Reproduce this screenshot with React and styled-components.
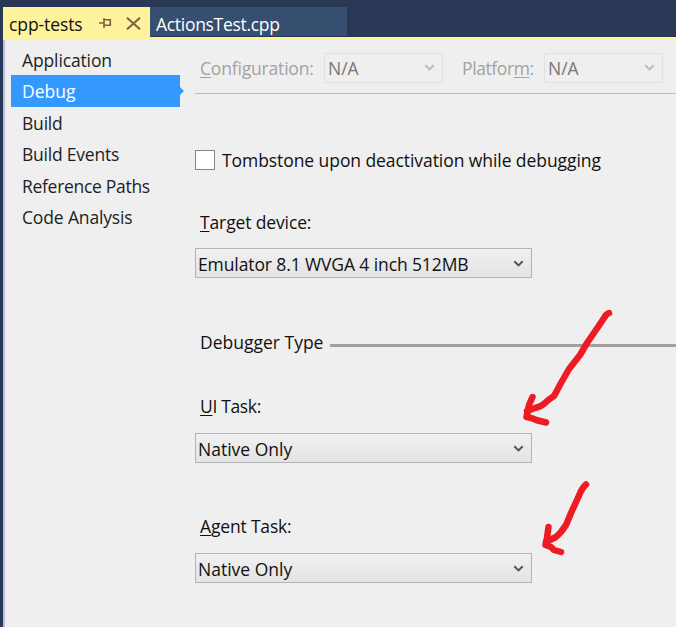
import React from "react";
import styled, { createGlobalStyle } from "styled-components";

const GlobalStyle = createGlobalStyle`
  * { box-sizing: border-box; }
  body { margin: 0; background: #293955; overflow: hidden; }
`;

const Window = styled.div`
  position: relative;
  display: flex;
  flex-direction: column;
  width: 676px;
  height: 627px;
  padding: 7px 0 0 3px;
  overflow: hidden;
  background: #293955;
  color: #1b1b1c;
  font-family: "Open Sans", "Noto Sans", sans-serif;
  font-size: 17.5px;
  line-height: 24px;
  white-space: nowrap;
`;

const Label = styled.span`
  letter-spacing: ${(p) => p.$spacing || 0}px;
  u {
    text-decoration-thickness: 1px;
    text-underline-offset: 2px;
    text-decoration-skip-ink: none;
  }
`;

const TabBar = styled.div`
  display: flex;
  height: 30px;
  flex: none;
`;

const Tab = styled.div`
  display: flex;
  align-items: center;
  width: ${(p) => (p.$active ? 147 : 197)}px;
  height: ${(p) => (p.$active ? 30 : 29)}px;
  padding: 4px 6px 0;
  background: ${(p) => (p.$active ? "#fff29d" : "#364e6f")};
  color: ${(p) => (p.$active ? "#111" : "#fff")};
`;

const TabIcons = styled.div`
  display: flex;
  align-items: center;
  gap: 14px;
  margin: -2px 3px 0 auto;
`;

const Body = styled.div`
  display: flex;
  flex: 1;
  min-height: 0;
  border-top: 3px solid #fff29d;
  background: #efefef;
  box-shadow: inset 2px 0 #b9c0dc;
`;

const Nav = styled.nav`
  display: flex;
  flex-direction: column;
  width: 178px;
  flex: none;
  padding: 4px 0 0 8px;
`;

const NavItem = styled.div`
  position: relative;
  height: 31.4px;
  width: 169px;
  padding: 4px 0 0 11px;
  background: ${(p) => (p.$selected ? "#3399ff" : "transparent")};
  color: ${(p) => (p.$selected ? "#fff" : "#1e1e1e")};
  &::after {
    content: "";
    display: ${(p) => (p.$selected ? "block" : "none")};
    position: absolute;
    left: 100%;
    top: 12px;
    border: 4px solid transparent;
    border-left-color: #3399ff;
    border-right: 0;
  }
`;

const Page = styled.main`
  display: flex;
  flex-direction: column;
  flex: 1;
  min-width: 0;
  padding: 12px 0 0 14px;
`;

const Toolbar = styled.div`
  display: flex;
  align-items: center;
  gap: 19px;
  height: 42px;
  padding: 0 0 10px 5px;
  border-bottom: 1px solid #bdbdbd;
  color: #a2a2a2;
`;

const ToolbarField = styled.div`
  display: flex;
  align-items: center;
  justify-content: space-between;
  width: ${(p) => p.$width}px;
`;

const Combo = styled.div`
  display: flex;
  align-items: center;
  justify-content: space-between;
  width: ${(p) => p.$width || 337}px;
  height: 30px;
  padding: ${(p) => (p.$disabled ? "0 7px 0 3px" : "1px 7px 0 2px")};
  border: 1px solid ${(p) => (p.$disabled ? "#e0e0e0" : "#b4b4b4")};
  background: ${(p) => (p.$disabled ? "#efefef" : "linear-gradient(#f0f0f0, #e4e4e4)")};
  color: ${(p) => (p.$disabled ? "#777" : "#111")};
`;

const CheckRow = styled.label`
  display: flex;
  align-items: center;
  gap: 7px;
  height: 24px;
  margin-top: 54px;
  color: #111;
`;

const CheckBox = styled.span`
  width: 20px;
  height: 20px;
  border: 1px solid #858585;
  background: #fff;
`;

const Field = styled.div`
  display: flex;
  flex-direction: column;
  gap: ${(p) => p.$gap}px;
  margin-top: ${(p) => p.$top}px;
  color: #111;
`;

const FieldLabel = styled.div`
  height: 24px;
  padding-left: 5px;
`;

const SectionTitle = styled.div`
  display: flex;
  align-items: center;
  height: 24px;
  margin-top: 52px;
  padding-left: 5px;
  color: #111;
`;

const SectionName = styled.div`
  width: 130px;
`;

const Rule = styled.div`
  flex: 1;
  height: 3px;
  margin-top: 7px;
  background: #a0a0a0;
`;

const Annotations = styled.svg`
  position: absolute;
  left: 0;
  top: 0;
`;

const Chevron = ({ color = "#555" }) => (
  <svg width="11" height="8" viewBox="0 0 11 8">
    <path d="M1.3 1.2L5.5 5.4L9.7 1.2" fill="none" stroke={color} strokeWidth="2" />
  </svg>
);

const Pin = () => (
  <svg width="13" height="12" viewBox="0 0 13 12">
    <path d="M0 6H5M5 1V11M5 2.7H11.3V9M5 8.2H12" fill="none" stroke="#756440" strokeWidth="1.6" />
  </svg>
);

const Close = () => (
  <svg width="15" height="13" viewBox="0 0 15 13">
    <path d="M1 .7L14 12.3M14 .7L1 12.3" fill="none" stroke="#756440" strokeWidth="2" />
  </svg>
);

const navItems = [
  { text: "Application", spacing: -0.13 },
  { text: "Debug", selected: true },
  { text: "Build", spacing: -0.2 },
  { text: "Build Events", spacing: -0.22 },
  { text: "Reference Paths", spacing: -0.3 },
  { text: "Code Analysis", spacing: -0.15 },
];

export default function App() {
  return (
    <Window>
      <GlobalStyle />
      <TabBar>
        <Tab $active>
          <Label $spacing={-0.1}>cpp-tests</Label>
          <TabIcons><Pin /><Close /></TabIcons>
        </Tab>
        <Tab><Label $spacing={-0.3}>ActionsTest.cpp</Label></Tab>
      </TabBar>
      <Body>
        <Nav>
          {navItems.map((item) => (
            <NavItem key={item.text} $selected={item.selected}>
              <Label $spacing={item.spacing}>{item.text}</Label>
            </NavItem>
          ))}
        </Nav>
        <Page>
          <Toolbar>
            <ToolbarField $width={243}>
              <Label $spacing={-0.18}><u>C</u>onfiguration:</Label>
              <Combo $disabled $width={119}><Label>N/A</Label><Chevron color="#bcbcbc" /></Combo>
            </ToolbarField>
            <ToolbarField $width={201}>
              <Label $spacing={-0.4}>Platfor<u>m</u>:</Label>
              <Combo $disabled $width={119}><Label>N/A</Label><Chevron color="#bcbcbc" /></Combo>
            </ToolbarField>
          </Toolbar>
          <CheckRow><CheckBox /><Label $spacing={-0.07}>Tombstone upon deactivation while debugging</Label></CheckRow>
          <Field $top={38} $gap={14}>
            <FieldLabel><Label $spacing={-0.13}><u>T</u>arget device:</Label></FieldLabel>
            <Combo><Label $spacing={-0.11}>Emulator 8.1 WVGA 4 inch 512MB</Label><Chevron /></Combo>
          </Field>
          <SectionTitle><SectionName><Label>Debugger Type</Label></SectionName><Rule /></SectionTitle>
          <Field $top={40} $gap={15}>
            <FieldLabel><Label $spacing={-0.35}><u>U</u>I Task:</Label></FieldLabel>
            <Combo><Label>Native Only</Label><Chevron /></Combo>
          </Field>
          <Field $top={51} $gap={15}>
            <FieldLabel><Label $spacing={-0.17}><u>A</u>gent Task:</Label></FieldLabel>
            <Combo><Label>Native Only</Label><Chevron /></Combo>
          </Field>
        </Page>
      </Body>
      <Annotations width="676" height="627" viewBox="0 0 676 627">
        <g fill="none" stroke="#ed1c24" strokeWidth="6.5" strokeLinecap="round" strokeLinejoin="round">
          <path d="M609 313Q606 314 604 318L598 327L587 343L580 355L569 369L561 383L554 396Q549 399 545 403Q541 407 535 408L527 411" />
          <path d="M532.5 397L529 405L526.5 417Q533 418 536 420L546 422.5" />
          <path d="M586 484.5Q583 487 581 491L577 500L571 513L566 525L561 532L556 537L546 542" />
          <path d="M548.5 527L547 538L545.5 545L551 547L554 550L561 552" />
        </g>
      </Annotations>
    </Window>
  );
}
